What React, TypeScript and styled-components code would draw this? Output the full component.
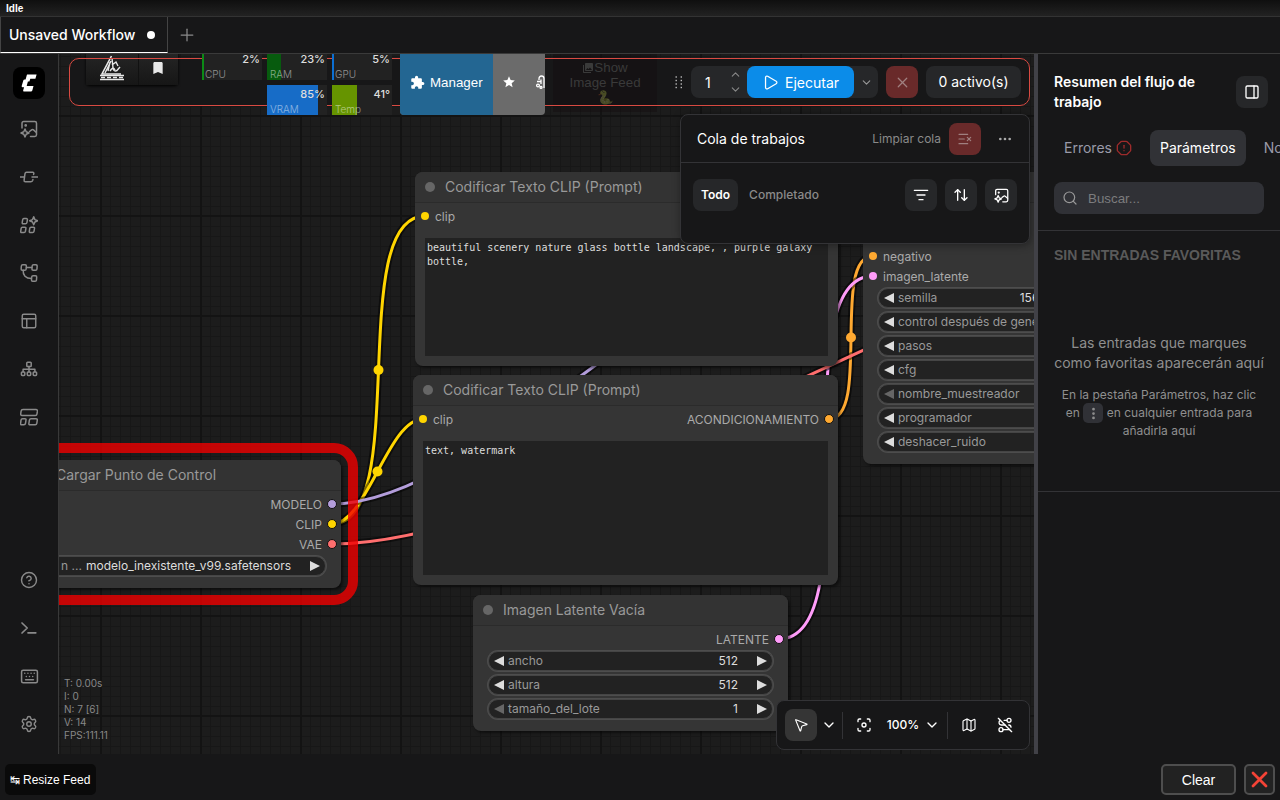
import type { ReactNode } from "react";
import styled, { createGlobalStyle } from "styled-components";
import {
  ArrowUpDown,
  ChevronDown,
  ChevronUp,
  CircleHelp,
  Ellipsis,
  EllipsisVertical,
  Focus,
  Keyboard,
  ListFilter,
  ListX,
  Map as MapIcon,
  MousePointer2,
  OctagonAlert,
  PanelRight,
  PanelsTopLeft,
  Play,
  Plus,
  RouteOff,
  Search,
  Settings,
  X,
} from "lucide-react";
import {
  MdBookmark,
  MdExtension,
  MdPhotoLibrary,
  MdStar,
} from "react-icons/md";

interface Widget {
  label: string;
  value?: string;
  atMin?: boolean;
}

interface Slot {
  name: string;
  color: string;
}

interface GraphNode {
  id: string;
  title: string;
  x: number;
  y: number;
  width: number;
  height: number;
  inputs?: Slot[];
  outputs?: Slot[];
  widgets?: Widget[];
  text?: string;
}

const YELLOW = "#ffd500";
const LILAC = "#b39ddb";
const RED = "#ff6e6e";
const ORANGE = "#ffa931";
const PINK = "#ff9cf9";

const nodes: GraphNode[] = [
  {
    id: "positive",
    title: "Codificar Texto CLIP (Prompt)",
    x: 415,
    y: 172,
    width: 423,
    height: 194,
    inputs: [{ name: "clip", color: YELLOW }],
    text: "beautiful scenery nature glass bottle landscape, , purple galaxy bottle,",
  },
  {
    id: "negative",
    title: "Codificar Texto CLIP (Prompt)",
    x: 413,
    y: 375,
    width: 425,
    height: 210,
    inputs: [{ name: "clip", color: YELLOW }],
    outputs: [{ name: "ACONDICIONAMIENTO", color: ORANGE }],
    text: "text, watermark",
  },
  {
    id: "latent",
    title: "Imagen Latente Vacía",
    x: 473,
    y: 595,
    width: 315,
    height: 136,
    outputs: [{ name: "LATENTE", color: PINK }],
    widgets: [
      { label: "ancho", value: "512" },
      { label: "altura", value: "512" },
      { label: "tamaño_del_lote", value: "1", atMin: true },
    ],
  },
  {
    id: "sampler",
    title: "",
    x: 863,
    y: 172,
    width: 315,
    height: 292,
    inputs: [
      { name: "", color: LILAC },
      { name: "", color: ORANGE },
      { name: "negativo", color: ORANGE },
      { name: "imagen_latente", color: PINK },
    ],
    widgets: [
      { label: "semilla", value: "156680208700286" },
      { label: "control después de generar" },
      { label: "pasos" },
      { label: "cfg" },
      { label: "nombre_muestreador", atMin: true },
      { label: "programador" },
      { label: "deshacer_ruido" },
    ],
  },
];

const links = [
  { color: ORANGE, from: [829, 419], to: [873, 256] },
  { color: YELLOW, from: [332, 524], to: [425, 216] },
  { color: YELLOW, from: [332, 524], to: [423, 419] },
  { color: PINK, from: [779, 639], to: [873, 276] },
  { color: LILAC, from: [332, 504], to: [873, 216] },
  { color: RED, from: [332, 544], to: [1219, 238] },
];

const spline = ([x1, y1]: number[], [x2, y2]: number[]) => {
  const d = Math.hypot(x2 - x1, y2 - y1) * 0.25;
  return `M${x1} ${y1}C${x1 + d} ${y1} ${x2 - d} ${y2} ${x2} ${y2}`;
};

function Glyph({ size = 18, children }: { size?: number; children: ReactNode }) {
  return (
    <svg
      width={size}
      height={size}
      viewBox="0 0 18 18"
      fill="none"
      stroke="currentColor"
      strokeWidth={1.5}
      strokeLinecap="round"
      strokeLinejoin="round"
    >
      {children}
    </svg>
  );
}

const ImageAi = ({ size }: { size?: number }) => (
  <Glyph size={size}>
    <path d="M2 8V3.2Q2 1.5 3.7 1.5H14.8Q16.5 1.5 16.5 3.2V14.8Q16.5 16.5 14.8 16.5H10.5" />
    <circle cx="5.7" cy="5.4" r=".6" />
    <path d="M9.5 11.5 11.6 9.8Q12.6 9 13.5 9.9L16.3 12.5" />
    <path d="M5 9 6.2 11.8 9 13 6.2 14.2 5 17 3.8 14.2 1 13 3.8 11.8Z" />
  </Glyph>
);

const NodeIcon = () => (
  <Glyph>
    <path d="M0 9H4.3M12 9H18" />
    <path d="M13.6 6.4 13.8 5.6Q14 4.3 12.8 4.3H6.6Q5.2 4.3 5 5.6L4.1 12.2Q3.8 13.7 5.4 13.7H11Q12.5 13.7 12.8 12.2L12.9 11.6" />
  </Glyph>
);

const AppsIcon = () => (
  <Glyph>
    <path d="M3.8 2.6H6.3Q7.6 2.6 7.4 3.8L6.9 6.6Q6.7 7.8 5.4 7.8H3.2Q2 7.8 2.2 6.6L2.7 3.6Q2.9 2.6 3.8 2.6Z" />
    <path d="M2.4 11.2H4.9Q6.1 11.2 5.9 12.4L5.4 15.4Q5.2 16.6 4 16.6H1.7Q.5 16.6.7 15.4L1.2 12.2Q1.4 11.2 2.4 11.2Z" />
    <path d="M11 11.2H13.5Q14.7 11.2 14.5 12.4L14 15.4Q13.8 16.6 12.6 16.6H10.3Q9.1 16.6 9.3 15.4L9.8 12.2Q10 11.2 11 11.2Z" />
    <path d="M13.7.8 14.9 3.6 17.7 4.8 14.9 6 13.7 8.8 12.5 6 9.7 4.8 12.5 3.6Z" />
  </Glyph>
);

const WorkflowIcon = () => (
  <Glyph>
    <rect x="1.5" y=".8" width="5" height="5.4" rx="1.3" transform="skewX(-4)" />
    <rect x="12.3" y=".8" width="5" height="5.4" rx="1.3" transform="skewX(-4)" />
    <rect x="12.6" y="11.8" width="5" height="5.4" rx="1.3" transform="skewX(-4)" />
    <path d="M6.5 3.4H11.8M3.2 6.3C2.8 11 5.6 14.5 11.4 14.5" />
  </Glyph>
);

const SitemapIcon = () => (
  <Glyph>
    <rect x="6.8" y="2.3" width="4.4" height="4.2" rx=".8" />
    <rect x="1.4" y="12" width="3.4" height="3.4" rx=".8" />
    <rect x="7.3" y="12" width="3.4" height="3.4" rx=".8" />
    <rect x="13.2" y="12" width="3.4" height="3.4" rx=".8" />
    <path d="M9 6.6V12M3.1 11.8V9.2H14.9V11.8" />
  </Glyph>
);

const TemplateIcon = () => (
  <Glyph>
    <path d="M3 1.6H16Q17.6 1.6 17.4 3.2L17 5.8Q16.8 7.4 15.3 7.4H2Q.5 7.4.7 5.8L1.1 3.2Q1.3 1.6 3 1.6Z" />
    <path d="M2.6 10.8H5Q6.2 10.8 6 12L5.5 15.4Q5.3 16.8 3.9 16.8H1.7Q.4 16.8.6 15.4L1 12.2Q1.2 10.8 2.6 10.8Z" />
    <path d="M11 10.8H16Q17.5 10.8 17.3 12L16.8 15.4Q16.6 16.8 15.2 16.8H10Q8.7 16.8 8.9 15.4L9.4 12.2Q9.6 10.8 11 10.8Z" />
  </Glyph>
);

const TerminalIcon = () => (
  <Glyph>
    <path d="M2 4 7.2 9 2 14M8 13.8H15.8" strokeWidth={1.7} />
  </Glyph>
);

const ComfyLogo = () => (
  <svg width="16" height="18" viewBox="0 0 16 18" fill="#fff">
    <path d="M6.2.5H15.6L14.4 4.8H9.3L8.4 7.6H6.9L5.7 12H12.5L11.3 16.4Q11 17.4 10 17.4H3Q1.8 17.4 2.2 16.2L3.1 13.2H1.4Q.4 13.2.7 12.1L2.3 6.4Q2.6 5.4 3.7 5.4H4.6L5.7 1.4Q5.9.5 6.2.5Z" />
  </svg>
);

const PyramidLogo = () => (
  <svg width="26" height="28" viewBox="0 0 26 28" fill="none" stroke="#e8e8e8">
    <path d="M12.5 3 3 21H22" strokeWidth="1.6" />
    <path d="M13 5 14 15M11 9 9 18M12 8 6 20M13 12 17 9 19 13" strokeWidth="1.4" />
    <path d="M14 15Q15 19 18 17.5L21 14M11 18Q14 13 16 17" strokeWidth="1.5" />
    <path d="M1 22.5H25M1 26.5H25" strokeWidth="1.4" />
    <path d="M2 24.5H24" strokeWidth="1.4" strokeDasharray="4 2" />
  </svg>
);

const LockGlyph = () => (
  <svg width="14" height="16" viewBox="0 0 14 16" fill="none" stroke="#fff" strokeWidth="1.3">
    <path d="M4 6V4.6Q4 2 6.5 2T9 4.6V14" />
    <path d="M2 7.5H6M6 5.5V10" />
    <circle cx="3" cy="11.5" r="1.4" />
    <circle cx="6" cy="13.4" r="1" />
  </svg>
);

function NodeWidget({ label, value, atMin }: Widget) {
  return (
    <Pill>
      <Arrow $dim={atMin} />
      <PillLabel>{label}</PillLabel>
      <PillValue>{value}</PillValue>
      <Arrow $right />
    </Pill>
  );
}

function NodeCard({ node }: { node: GraphNode }) {
  const rows = Math.max(node.inputs?.length ?? 0, node.outputs?.length ?? 0);
  return (
    <Card $x={node.x} $y={node.y} $w={node.width} $h={node.height}>
      <CardTitle>
        <TitleDot />
        {node.title}
      </CardTitle>
      <Slots>
        {Array.from({ length: rows }, (_, i) => (
          <SlotRow key={i}>
            {node.inputs?.[i] && (
              <SlotSide>
                <SlotDot $color={node.inputs[i].color} />
                {node.inputs[i].name}
              </SlotSide>
            )}
            {node.outputs?.[i] && (
              <SlotSide $out>
                {node.outputs[i].name}
                <SlotDot $color={node.outputs[i].color} $out />
              </SlotSide>
            )}
          </SlotRow>
        ))}
      </Slots>
      {node.text && <Prompt>{node.text}</Prompt>}
      {node.widgets && (
        <Widgets>
          {node.widgets.map((w) => (
            <NodeWidget key={w.label} {...w} />
          ))}
        </Widgets>
      )}
    </Card>
  );
}

function Links() {
  return (
    <LinkLayer viewBox="0 0 1280 800">
      {links.map(({ color, from, to }, i) => (
        <g key={i} fill="none">
          <path d={spline(from, to)} stroke="#000" strokeOpacity=".5" strokeWidth="7" />
          <path d={spline(from, to)} stroke={color} strokeWidth="3" />
          <circle
            cx={(from[0] + to[0]) / 2}
            cy={(from[1] + to[1]) / 2}
            r="5"
            fill={color}
          />
        </g>
      ))}
    </LinkLayer>
  );
}

function Loader() {
  return (
    <>
      <Card $x={26} $y={460} $w={315} $h={128}>
        <CardTitle>
          <TitleDot />
          Cargar Punto de Control
        </CardTitle>
        <Slots>
          {[
            { name: "MODELO", color: LILAC },
            { name: "CLIP", color: YELLOW },
            { name: "VAE", color: RED },
          ].map((s) => (
            <SlotRow key={s.name}>
              <SlotSide $out>
                {s.name}
                <SlotDot $color={s.color} $out />
              </SlotSide>
            </SlotRow>
          ))}
        </Slots>
        <Widgets>
          <Pill>
            <Arrow />
            <PillLabel>n ...</PillLabel>
            <PillValue>modelo_inexistente_v99.safetensors</PillValue>
            <Arrow $right />
          </Pill>
        </Widgets>
      </Card>
      <ErrorOutline />
    </>
  );
}

const monitors = [
  { label: "CPU", value: "2%", fill: 2, color: "#0c8a16" },
  { label: "RAM", value: "23%", fill: 14, color: "#075b0e" },
  { label: "GPU", value: "5%", fill: 2, color: "#0c6fd2" },
  { label: "VRAM", value: "85%", fill: 51, color: "#176cc7" },
  { label: "Temp", value: "41°", fill: 25, color: "#669400" },
];

function TopBar() {
  return (
    <ActionBar>
      <ButtonGroup>
        <GroupButton $w={52}>
          <PyramidLogo />
        </GroupButton>
        <GroupButton $w={39}>
          <MdBookmark size={16} />
        </GroupButton>
      </ButtonGroup>
      <Monitors>
        {monitors.map((m) => (
          <Monitor key={m.label}>
            <MonitorFill style={{ width: m.fill }} $color={m.color} />
            <MonitorValue>{m.value}</MonitorValue>
            <MonitorLabel>{m.label}</MonitorLabel>
          </Monitor>
        ))}
      </Monitors>
      <ManagerGroup>
        <ManagerButton>
          <MdExtension size={15} />
          Manager
        </ManagerButton>
        <ManagerExtras>
          <MdStar size={14} />
          <LockGlyph />
        </ManagerExtras>
      </ManagerGroup>
      <FeedButton>
        <span>
          <MdPhotoLibrary size={12} />
          Show
        </span>
        <span>Image Feed</span>
        <span>🐍</span>
      </FeedButton>
      <RunControls>
        <svg width="8" height="14" viewBox="0 0 8 14" fill="#bbb">
          {[2, 5.5, 9, 12.5].map((y) => (
            <g key={y}>
              <rect x="0.5" y={y - 0.7} width="1.4" height="1.4" />
              <rect x="5.6" y={y - 0.7} width="1.4" height="1.4" />
            </g>
          ))}
        </svg>
        <BatchGroup>
          <BatchInput>
            1
            <Stepper>
              <ChevronUp size={13} />
              <ChevronDown size={13} />
            </Stepper>
          </BatchInput>
          <RunButton>
            <Play size={17} strokeWidth={1.8} />
            Ejecutar
          </RunButton>
          <RunMore>
            <ChevronDown size={13} />
          </RunMore>
        </BatchGroup>
        <DangerButton>
          <X size={17} strokeWidth={1.7} />
        </DangerButton>
        <ActiveButton>0 activo(s)</ActiveButton>
      </RunControls>
    </ActionBar>
  );
}

function QueuePanel() {
  return (
    <Queue>
      <QueueHeader>
        <QueueTitle>Cola de trabajos</QueueTitle>
        <QueueClear>Limpiar cola</QueueClear>
        <DangerButton>
          <ListX size={16} strokeWidth={1.8} />
        </DangerButton>
        <PlainButton>
          <Ellipsis size={16} />
        </PlainButton>
      </QueueHeader>
      <QueueTools>
        <Chip $active>Todo</Chip>
        <Chip>Completado</Chip>
        <Spacer />
        <SquareButton>
          <ListFilter size={16} />
        </SquareButton>
        <SquareButton>
          <ArrowUpDown size={16} />
        </SquareButton>
        <SquareButton>
          <ImageAi size={15} />
        </SquareButton>
      </QueueTools>
    </Queue>
  );
}

function ViewBar() {
  return (
    <ViewControls>
      <CursorButton>
        <MousePointer2 size={16} strokeWidth={1.7} />
      </CursorButton>
      <IconCell $w={24}>
        <ChevronDown size={16} />
      </IconCell>
      <Divider />
      <IconCell $w={40}>
        <Focus size={16} />
      </IconCell>
      <Zoom>
        100%
        <ChevronDown size={16} />
      </Zoom>
      <Divider />
      <IconCell $w={40}>
        <MapIcon size={16} strokeWidth={1.7} />
      </IconCell>
      <IconCell $w={32}>
        <RouteOff size={16} />
      </IconCell>
    </ViewControls>
  );
}

function SidePanel() {
  return (
    <Panel>
      <PanelHeader>
        <PanelTitle>Resumen del flujo de trabajo</PanelTitle>
        <SquareButton>
          <PanelRight size={16} strokeWidth={2} />
        </SquareButton>
      </PanelHeader>
      <PanelTabs>
        <PanelTab>
          Errores
          <OctagonAlert size={16} color="#9d2b2b" />
        </PanelTab>
        <PanelTab $active>Parámetros</PanelTab>
        <PanelTab>Nodos</PanelTab>
      </PanelTabs>
      <SearchBox>
        <Search size={16} strokeWidth={1.8} />
        Buscar...
      </SearchBox>
      <Favorites>
        <FavoritesTitle>SIN ENTRADAS FAVORITAS</FavoritesTitle>
        <EmptyText>
          Las entradas que marques
          <br />
          como favoritas aparecerán aquí
        </EmptyText>
        <EmptyHint>
          <span>En la pestaña Parámetros, haz clic</span>
          <HintLine>
            en
            <Key>
              <EllipsisVertical size={15} strokeWidth={2.4} />
            </Key>
            en cualquier entrada para
          </HintLine>
          <span>añadirla aquí</span>
        </EmptyHint>
      </Favorites>
    </Panel>
  );
}

export default function App() {
  return (
    <>
      <GlobalStyle />
      <Page>
        <StatusBar>Idle</StatusBar>
        <TabBar>
          <WorkflowTab>
            Unsaved Workflow
            <UnsavedDot />
          </WorkflowTab>
          <Plus size={20} strokeWidth={1.5} color="#8a8a8a" />
        </TabBar>
        <Body>
          <Sidebar>
            <LogoBox>
              <ComfyLogo />
            </LogoBox>
            <NavItem><ImageAi /></NavItem>
            <NavItem><NodeIcon /></NavItem>
            <NavItem><AppsIcon /></NavItem>
            <NavItem><WorkflowIcon /></NavItem>
            <NavItem><PanelsTopLeft size={18} strokeWidth={1.9} /></NavItem>
            <NavItem><SitemapIcon /></NavItem>
            <NavItem><TemplateIcon /></NavItem>
            <Spacer />
            <NavItem><CircleHelp size={18} strokeWidth={1.9} /></NavItem>
            <NavItem><TerminalIcon /></NavItem>
            <NavItem><Keyboard size={19} strokeWidth={1.9} /></NavItem>
            <NavItem><Settings size={18} strokeWidth={1.9} /></NavItem>
          </Sidebar>
          <Canvas>
            <Pan>
              <Links />
              {nodes.map((n) => (
                <NodeCard key={n.id} node={n} />
              ))}
              <Loader />
            </Pan>
            <Stats>
              <span>T: 0.00s</span>
              <span>I: 0</span>
              <span>N: 7 [6]</span>
              <span>V: 14</span>
              <span>FPS:111.11</span>
            </Stats>
            <TopBar />
            <QueuePanel />
            <ViewBar />
          </Canvas>
          <Splitter />
          <SidePanel />
        </Body>
        <Footer>
          <ResizeButton>
            <span>↹</span>
            Resize Feed
          </ResizeButton>
          <Spacer />
          <FooterButton $w={75}>Clear</FooterButton>
          <FooterButton $w={31}>
            <svg
              width="17"
              height="17"
              viewBox="0 0 17 17"
              stroke="#f44336"
              strokeWidth="2.8"
              strokeLinecap="round"
            >
              <path d="M2 2 15 15M15 2 2 15" />
            </svg>
          </FooterButton>
        </Footer>
      </Page>
    </>
  );
}

const GlobalStyle = createGlobalStyle`
  * {
    box-sizing: border-box;
  }
  body {
    margin: 0;
    background: #171718;
    color: #fff;
    font-family: Inter, sans-serif;
    font-size: 14px;
    overflow: hidden;
  }
  svg {
    display: block;
    flex: none;
  }
`;

const Page = styled.div`
  width: 1280px;
  height: 800px;
  display: flex;
  flex-direction: column;
  overflow: hidden;
`;

const StatusBar = styled.div`
  height: 17px;
  padding: 1px 0 0 6px;
  font: bold 10px/15px "Liberation Sans", sans-serif;
  background: linear-gradient(#0f0f0f, #222);
  border-bottom: 1px solid #333;
`;

const TabBar = styled.div`
  height: 37px;
  display: flex;
  align-items: center;
  gap: 9px;
  border-bottom: 1px solid #3a3a3a;
`;

const WorkflowTab = styled.div`
  width: 168px;
  height: 36px;
  display: flex;
  align-items: center;
  gap: 12px;
  padding: 0 0 1px 8px;
  font-weight: 500;
  border: 1px solid #444;
  border-top: none;
  border-bottom: 1px solid #fff;
`;

const UnsavedDot = styled.span`
  width: 8px;
  height: 8px;
  margin-top: 1px;
  border-radius: 50%;
  background: #fff;
`;

const Body = styled.div`
  height: 700px;
  display: flex;
`;

const Sidebar = styled.nav`
  width: 59px;
  display: flex;
  flex-direction: column;
  align-items: center;
  padding: 13px 0 6px;
  border-right: 1px solid #393939;
`;

const LogoBox = styled.div`
  width: 32px;
  height: 32px;
  display: grid;
  place-items: center;
  margin-bottom: 6px;
  border-radius: 8px;
  background: #000;
`;

const NavItem = styled.div`
  height: 48px;
  display: flex;
  align-items: center;
  color: #8a8a8a;
`;

const Spacer = styled.div`
  flex: 1;
`;

const Canvas = styled.main`
  position: relative;
  width: 975px;
  overflow: hidden;
  background-color: #1c1c1c;
  background-image: linear-gradient(90deg, #131313 2px, transparent 2px),
    linear-gradient(#131313 2px, transparent 2px),
    linear-gradient(90deg, #171717 1px, transparent 1px),
    linear-gradient(#171717 1px, transparent 1px);
  background-size: 100px 100px, 100px 100px, 10px 10px, 10px 10px;
  background-position: 41px 0, 0 61px, 1px 0, 0 2px;
`;

const Pan = styled.div`
  transform: translate(-59px, -54px);
  width: 1280px;
  height: 800px;
`;

const LinkLayer = styled.svg`
  position: absolute;
  inset: 0;
  width: 1280px;
  height: 800px;
`;

const Card = styled.section<{ $x: number; $y: number; $w: number; $h: number }>`
  position: absolute;
  left: ${(p) => p.$x}px;
  top: ${(p) => p.$y}px;
  width: ${(p) => p.$w}px;
  height: ${(p) => p.$h}px;
  display: flex;
  flex-direction: column;
  border-radius: 8px;
  background: #353535;
  box-shadow: 2px 2px 3px rgba(0, 0, 0, 0.5);
`;

const CardTitle = styled.h2`
  height: 31px;
  flex: none;
  display: flex;
  align-items: center;
  gap: 10px;
  margin: 0;
  padding: 0 0 1px 10px;
  font-size: 14px;
  font-weight: 400;
  line-height: 16px;
  color: #999;
  white-space: nowrap;
  border-radius: 8px 8px 0 0;
  background: #333;
  border-bottom: 1px solid #2b2b2b;
`;

const TitleDot = styled.span`
  width: 10px;
  height: 10px;
  margin-top: 1px;
  border-radius: 50%;
  background: #666;
`;

const Slots = styled.div`
  padding-top: 3px;
`;

const SlotRow = styled.div`
  height: 20px;
  display: flex;
  align-items: center;
`;

const SlotSide = styled.div<{ $out?: boolean }>`
  display: flex;
  align-items: center;
  gap: ${(p) => (p.$out ? 5 : 6)}px;
  padding: ${(p) => (p.$out ? "0 4px 0 0" : "0 0 0 6px")};
  margin-left: ${(p) => (p.$out ? "auto" : 0)};
  font-size: 12px;
  color: #aaa;
`;

const SlotDot = styled.span<{ $color: string; $out?: boolean }>`
  width: ${(p) => (p.$out ? 10 : 8)}px;
  height: ${(p) => (p.$out ? 10 : 8)}px;
  border-radius: 50%;
  background: ${(p) => p.$color};
  border: ${(p) => (p.$out ? "1px solid #111" : "none")};
`;

const Prompt = styled.div`
  flex: 1;
  margin: 12px 10px 10px;
  padding: 3px 2px;
  font: 10px/14px "DejaVu Sans Mono", monospace;
  color: #ddd;
  background: #222;
`;

const Widgets = styled.div`
  display: flex;
  flex-direction: column;
  gap: 4px;
  padding: 2px 15px 0;
`;

const Pill = styled.div`
  height: 20px;
  display: flex;
  align-items: center;
  padding: 0 5px;
  font-size: 12px;
  line-height: 14px;
  white-space: nowrap;
  border: 1px solid #454545;
  border-radius: 10px;
  background: #222;
  box-shadow: 0 0 0 1px #4d4d4d;
`;

const Arrow = styled.span<{ $right?: boolean; $dim?: boolean }>`
  width: 10px;
  height: 10px;
  flex: none;
  background: ${(p) => (p.$dim ? "#666" : "#ddd")};
  clip-path: ${(p) =>
    p.$right
      ? "polygon(0 0, 100% 50%, 0 100%)"
      : "polygon(100% 0, 100% 100%, 0 50%)"};
`;

const PillLabel = styled.span`
  padding: 0 0 1px 4px;
  color: #999;
`;

const PillValue = styled.span`
  margin-left: auto;
  padding: 0 19px 1px 0;
  color: #ddd;
`;

const ErrorOutline = styled.div`
  position: absolute;
  left: 9px;
  top: 443px;
  width: 349px;
  height: 162px;
  border: 10px solid rgba(240, 0, 0, 0.8);
  border-radius: 24px;
`;

const Stats = styled.div`
  position: absolute;
  left: 5px;
  bottom: 12px;
  display: flex;
  flex-direction: column;
  font-size: 10px;
  line-height: 13px;
  color: #888;
`;

const ActionBar = styled.div`
  position: absolute;
  left: 10px;
  top: 4px;
  width: 961px;
  height: 48px;
  display: flex;
  align-items: flex-start;
  padding-left: 17px;
  border-radius: 10px;
  background: #171718;
  &::before {
    content: "";
    position: absolute;
    inset: 0;
    border: 1px solid #d94a42;
    border-radius: 10px;
  }
`;

const ButtonGroup = styled.div`
  height: 42px;
  display: flex;
  gap: 1px;
  margin-top: -15px;
  border-radius: 4px;
  background: #111;
  box-shadow: 0 1px 3px #000;
`;

const GroupButton = styled.div<{ $w: number }>`
  width: ${(p) => p.$w}px;
  display: flex;
  justify-content: center;
  align-items: flex-end;
  padding-bottom: 4px;
  color: #e8e8e8;
  background: linear-gradient(#2a2a2a, #161616);
  &:last-child {
    padding: 0 2px 9px 0;
  }
`;

const Monitors = styled.div`
  position: relative;
  width: 190px;
  display: flex;
  flex-wrap: wrap;
  justify-content: flex-end;
  gap: 5px;
  margin: -8px 0 0 24px;
`;

const Monitor = styled.div`
  position: relative;
  width: 60px;
  height: 30px;
  display: flex;
  flex-direction: column;
  justify-content: space-between;
  padding: 1px 2px 1px 3px;
  background: #222;
`;

const MonitorFill = styled.span<{ $color: string }>`
  position: absolute;
  left: 0;
  top: 0;
  bottom: 0;
  background: ${(p) => p.$color};
`;

const MonitorValue = styled.span`
  position: relative;
  align-self: flex-end;
  font-size: 11px;
  font-weight: 500;
  line-height: 16px;
  color: #ddd;
`;

const MonitorLabel = styled.span`
  position: relative;
  font-size: 10px;
  font-weight: 300;
  line-height: 14px;
  color: rgba(255, 255, 255, 0.5);
`;

const ManagerGroup = styled.div`
  position: relative;
  width: 145px;
  height: 66px;
  display: flex;
  overflow: hidden;
  margin: -9px 0 0 8px;
  border-radius: 4px;
  background: #6b6b6b;
`;

const ManagerButton = styled.div`
  width: 93px;
  flex: none;
  display: flex;
  align-items: center;
  gap: 5px;
  padding-left: 10px;
  font: 13.33px "Liberation Sans", sans-serif;
  background: #236692;
`;

const ManagerExtras = styled.div`
  display: flex;
  align-items: center;
  gap: 19px;
  padding-left: 9px;
`;

const FeedButton = styled.div`
  width: 104px;
  height: 60px;
  display: flex;
  flex-direction: column;
  align-items: center;
  margin: -6px 0 0 8px;
  padding-top: 8px;
  font: 13.33px/15px "Liberation Sans", sans-serif;
  color: #3a3a3a;
  background: rgba(20, 14, 16, 0.5);
  span {
    display: flex;
    align-items: center;
  }
  span:last-child {
    opacity: 0.3;
  }
`;

const RunControls = styled.div`
  display: flex;
  align-items: center;
  gap: 8px;
  margin: 8px 0 0 18px;
`;

const BatchGroup = styled.div`
  height: 32px;
  display: flex;
  border-radius: 8px;
  background: #262729;
`;

const BatchInput = styled.div`
  width: 56px;
  display: flex;
  align-items: center;
  justify-content: space-between;
  padding: 0 5px 0 14px;
`;

const Stepper = styled.div`
  display: flex;
  flex-direction: column;
  gap: 2px;
  color: #888;
`;

const RunButton = styled.div`
  width: 107px;
  display: flex;
  align-items: center;
  justify-content: center;
  gap: 6px;
  border-radius: 8px;
  background: #0b8ce9;
`;

const RunMore = styled.div`
  width: 24px;
  display: grid;
  place-items: center;
  color: #999;
`;

const SquareButton = styled.div`
  width: 32px;
  height: 32px;
  flex: none;
  display: grid;
  place-items: center;
  border-radius: 8px;
  background: #262729;
`;

const DangerButton = styled(SquareButton)`
  color: #a08080;
  background: #692a2a;
`;

const PlainButton = styled(SquareButton)`
  color: #aaa;
  background: none;
`;

const ActiveButton = styled.div`
  width: 95px;
  height: 32px;
  display: grid;
  place-items: center;
  padding-bottom: 1px;
  border-radius: 8px;
  background: #262729;
`;

const Queue = styled.div`
  position: absolute;
  right: 4px;
  top: 60px;
  width: 350px;
  height: 130px;
  border: 1px solid #333336;
  border-radius: 8px;
  background: #171718;
  box-shadow: 1px 1px 8px rgba(0, 0, 0, 0.4);
`;

const QueueHeader = styled.div`
  height: 48px;
  display: flex;
  align-items: center;
  gap: 8px;
  padding: 0 8px 0 16px;
  border-bottom: 1px solid #333336;
`;

const QueueTitle = styled.span`
  flex: 1;
`;

const QueueClear = styled.span`
  font-size: 12px;
  color: #8a8a8a;
`;

const QueueTools = styled.div`
  display: flex;
  gap: 8px;
  padding: 16px 12px;
`;

const Chip = styled.span<{ $active?: boolean }>`
  height: 32px;
  display: flex;
  align-items: center;
  padding: 0 ${(p) => (p.$active ? 8 : 3)}px 1px;
  font-size: 12px;
  font-weight: ${(p) => (p.$active ? 600 : 500)};
  color: ${(p) => (p.$active ? "#fff" : "#8a8a8a")};
  border-radius: 8px;
  background: ${(p) => (p.$active ? "#262729" : "none")};
`;

const ViewControls = styled.div`
  position: absolute;
  right: 4px;
  bottom: 4px;
  width: 254px;
  height: 50px;
  display: flex;
  align-items: center;
  padding: 0 8px;
  border: 1px solid #333336;
  border-radius: 8px;
  background: #171718;
`;

const CursorButton = styled(SquareButton)`
  background: #353535;
`;

const IconCell = styled.div<{ $w: number }>`
  width: ${(p) => p.$w}px;
  display: grid;
  place-items: center;
`;

const Divider = styled.span`
  width: 1px;
  height: 27px;
  margin: 0 1px;
  background: #333336;
`;

const Zoom = styled.div`
  width: 63px;
  display: flex;
  align-items: center;
  gap: 5px;
  padding-left: 3px;
  font-size: 12px;
  line-height: 14px;
  font-weight: 500;
`;

const Splitter = styled.div`
  width: 4px;
  background: #414147;
`;

const Panel = styled.aside`
  width: 242px;
  display: flex;
  flex-direction: column;
  overflow: hidden;
`;

const PanelHeader = styled.div`
  display: flex;
  align-items: center;
  justify-content: space-between;
  padding: 18px 12px 0 16px;
`;

const PanelTitle = styled.h1`
  width: 160px;
  margin: 0;
  font-size: 14px;
  font-weight: 600;
  line-height: 20px;
`;

const PanelTabs = styled.div`
  display: flex;
  gap: 8px;
  margin-top: 18px;
  padding-left: 16px;
`;

const PanelTab = styled.div<{ $active?: boolean }>`
  height: 36px;
  flex: none;
  display: flex;
  align-items: center;
  gap: 4px;
  padding: 0 10px 1px;
  color: ${(p) => (p.$active ? "#fff" : "#9a9aa8")};
  border-radius: 8px;
  background: ${(p) => (p.$active ? "#313236" : "none")};
`;

const SearchBox = styled.div`
  width: 210px;
  height: 32px;
  display: flex;
  align-items: center;
  gap: 10px;
  margin: 16px 16px 16px;
  padding-left: 8px;
  font: 13.33px "Liberation Sans", sans-serif;
  color: #7c7c7e;
  border-radius: 8px;
  background: #303136;
  svg {
    color: #999;
  }
`;

const Favorites = styled.div`
  height: 262px;
  border: solid #333336;
  border-width: 1px 0;
  text-align: center;
  color: #8f8f8f;
`;

const FavoritesTitle = styled.h3`
  margin: 16px 16px 0;
  font: bold 14px/17px "Liberation Sans", sans-serif;
  text-align: left;
  color: #5a5a5a;
`;

const EmptyText = styled.p`
  margin: 69px 0 0;
  line-height: 20px;
`;

const EmptyHint = styled.div`
  display: flex;
  flex-direction: column;
  align-items: center;
  margin-top: 14px;
  font-size: 12px;
  line-height: 16px;
`;

const HintLine = styled.span`
  height: 20px;
  display: flex;
  align-items: center;
  gap: 3.5px;
`;

const Key = styled.kbd`
  width: 20px;
  height: 20px;
  display: grid;
  place-items: center;
  border-radius: 5px;
  background: #303136;
`;

const Footer = styled.footer`
  height: 46px;
  display: flex;
  align-items: flex-start;
  gap: 8px;
  padding: 10px 5px;
  font-family: "Liberation Sans", sans-serif;
`;

const ResizeButton = styled.div`
  width: 91px;
  height: 31px;
  display: flex;
  align-items: center;
  gap: 3px;
  padding-left: 5px;
  font-size: 12px;
  border-radius: 5px;
  background: #0a0a0a;
  white-space: nowrap;
`;

const FooterButton = styled.div<{ $w: number }>`
  width: ${(p) => p.$w}px;
  height: 31px;
  display: grid;
  place-items: center;
  border: 2px solid #4e4e4e;
  border-radius: 5px;
  background: #222;
`;
